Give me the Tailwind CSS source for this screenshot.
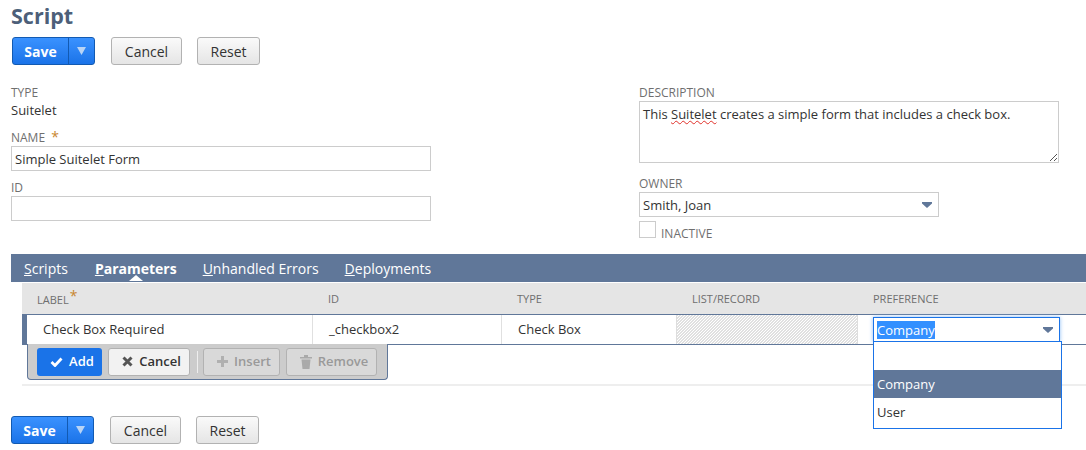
<!DOCTYPE html>
<html lang="en">
<head>
  <meta charset="UTF-8">
  <title>Script</title>
  <script src="https://cdn.jsdelivr.net/npm/@tailwindcss/browser@4"></script>
</head>
<body class="bg-white h-[450px] w-[1086px] overflow-hidden font-['Open_Sans',sans-serif] text-[13px] text-[#333]">
  <h1 class="pl-[11px] pt-[2px] h-[37px] text-[21.5px] leading-[28px] font-bold text-[#4d5f79]">Script</h1>

  <div class="flex pl-[12px] h-[28px]">
    <div class="flex w-[83px] h-[28px] rounded-[3px] border border-[#125ab2] bg-gradient-to-b from-[#3a92ff] to-[#1a73e8] text-white text-[14px] font-bold">
      <span class="w-[55px] flex items-center justify-center">Save</span>
      <span class="flex-1 flex items-center justify-center border-l border-[#125ab2]">
        <svg width="9" height="8" viewBox="0 0 9 8"><path d="M0 0h9L4.500 8z" fill="#b9d4f5"/></svg>
      </span>
    </div>
    <button class="ml-[16px] w-[71px] rounded-[3px] border border-[#b2b2b2] bg-gradient-to-b from-[#fafafa] to-[#e5e5e5] text-[14px] font-medium text-[#333]">Cancel</button>
    <button class="ml-[15px] w-[63px] rounded-[3px] border border-[#b2b2b2] bg-gradient-to-b from-[#fafafa] to-[#e5e5e5] text-[14px] font-medium text-[#333]">Reset</button>
  </div>

  <div class="flex pl-[11px] pt-[20px] h-[189px]">
    <div class="w-[628px]">
      <div class="text-[12px] leading-[16px] text-[#6f6f6f]">TYPE</div>
      <div class="-mt-px leading-[20px]">Suitelet</div>
      <div class="mt-[8px] h-[18px] text-[12px] leading-[18px] text-[#6f6f6f]">NAME <span class="ml-[3px] text-[#c8862f] text-[14px]">*</span></div>
      <input value="Simple Suitelet Form" class="block w-[420px] h-[25px] px-[3px] border border-[#ccc] outline-none">
      <div class="mt-[8px] h-[17px] text-[12px] leading-[17px] text-[#6f6f6f]">ID</div>
      <input class="block w-[420px] h-[25px] px-[3px] border border-[#ccc] outline-none">
    </div>
    <div class="w-[420px]">
      <div class="text-[12px] leading-[16px] text-[#6f6f6f]">DESCRIPTION</div>
      <div class="relative w-[420px] h-[62px] px-[3px] pt-[3px] border border-[#ccc] leading-[19px]">
        This <span class="underline decoration-wavy decoration-[#e0302a] decoration-1">Suitelet</span> creates a simple form that includes a check box.
        <svg class="absolute right-0 bottom-0" width="9" height="9" viewBox="0 0 9 9"><path d="M1 8l7-7M5 8l3-3" stroke="#555" stroke-width="1"/></svg>
      </div>
      <div class="mt-[11px] h-[18px] pt-px text-[12px] leading-[18px] text-[#6f6f6f]">OWNER</div>
      <div class="flex items-center justify-between w-[300px] h-[25px] pl-[3px] pr-[6px] border border-[#ccc]">
        <span class="pt-[2px]">Smith, Joan</span>
        <svg width="10" height="6" viewBox="0 0 10 6"><path d="M0 0h10v1.500L5 6 0 1.500z" fill="#607799"/></svg>
      </div>
      <div class="flex mt-[4px]">
        <span class="w-[17px] h-[17px] border border-[#ccc]"></span>
        <span class="ml-[5px] mt-[5px] text-[12px] leading-[16px] text-[#6f6f6f]">INACTIVE</span>
      </div>
    </div>
  </div>

  <div class="ml-[11px] flex h-[28px] pl-[13px] pt-px bg-[#607799] text-[14px] leading-[28px] text-white">
    <span><u>S</u>cripts</span>
    <span class="relative ml-[27px] font-bold"><u>P</u>arameters
      <span class="absolute left-[34px] bottom-[1px] w-0 h-0 border-x-[7px] border-x-transparent border-b-[6px] border-b-white"></span>
    </span>
    <span class="ml-[26px]"><u>U</u>nhandled Errors</span>
    <span class="ml-[26px]"><u>D</u>eployments</span>
  </div>

  <div class="relative ml-[22px] mt-[1px]">
    <div class="flex h-[31px] bg-[#e5e5e5] text-[11px] leading-[31px] text-[#6f6f6f]">
      <div class="w-[290px] pl-[15px]">LABEL<span class="relative -top-[3px] ml-[1px] text-[14px] text-[#c8862f]">*</span></div>
      <div class="w-[189px] pl-[16px]">ID</div>
      <div class="w-[175px] pl-[16px]">TYPE</div>
      <div class="w-[181px] pl-[16px]">LIST/RECORD</div>
      <div class="pl-[16px]">PREFERENCE</div>
    </div>

    <div class="flex h-[31px] border-y border-[#607799] border-l-[5px] border-l-[#607799] leading-[29px]">
      <div class="w-[286px] pl-[16px] border-r border-[#e0e0e0]">Check Box Required</div>
      <div class="w-[189px] pl-[16px] border-r border-[#e0e0e0]">_checkbox2</div>
      <div class="w-[174px] pl-[16px]">Check Box</div>
      <div class="w-[182px] border-x border-[#ddd] bg-[repeating-linear-gradient(135deg,#e0e0e0_0,#e0e0e0_1px,#fff_1px,#fff_2.12px)]"></div>
    </div>

    <div class="flex items-center w-[361px] h-[36px] ml-[5px] pl-[9px] -mt-px bg-[#ccc] border border-[#607799] border-t-0 rounded-b-[4px] text-[13px] font-semibold">
      <span class="flex items-center justify-center gap-[6px] w-[65px] h-[28px] pl-[5px] rounded-[3px] bg-[#1a73e8] text-white">
        <svg width="13" height="10" viewBox="0 0 13 10"><path d="M1.500 5l3.500 3.500L11.500 1.500" fill="none" stroke="#fff" stroke-width="2.800"/></svg>Add
      </span>
      <span class="ml-[6px] flex items-center justify-center gap-[6px] w-[82px] h-[28px] pl-[5px] rounded-[3px] border border-[#b2b2b2] bg-[#f2f2f2] text-[#333]">
        <svg width="11" height="11" viewBox="0 0 11 11"><path d="M1.500 1.500l8 8M9.500 1.500l-8 8" stroke="#555" stroke-width="3"/></svg>Cancel
      </span>
      <span class="ml-[7px] w-[1px] h-[22px] bg-[#eee]"></span>
      <span class="ml-[5px] flex items-center justify-center gap-[6px] w-[77px] h-[28px] pl-[5px] rounded-[3px] border border-[#b2b2b2] bg-[#d9d9d9] text-[#999]">
        <svg width="11" height="11" viewBox="0 0 11 11"><path d="M5.500 0v11M0 5.500h11" stroke="#b0b0b0" stroke-width="3"/></svg>Insert
      </span>
      <span class="ml-[6px] flex items-center justify-center gap-[6px] w-[91px] h-[28px] pl-[5px] rounded-[3px] border border-[#b2b2b2] bg-[#d9d9d9] text-[#999]">
        <svg width="12" height="14" viewBox="0 0 12 14"><path d="M0 2h12v1.500H0zM4 0h4v2H4zM1.500 4.500h9L9.500 14h-7z" fill="#aaa"/></svg>Remove
      </span>
    </div>

    <div class="h-[2px] mt-[4px] bg-[#eee]"></div>

    <div class="absolute left-[851px] top-[34px] flex items-center justify-between w-[187px] h-[25px] pl-[3px] pr-[6px] bg-white border border-[#1a73e8] shadow-[0_0_4px_#8bbcf5]">
      <span class="bg-[#3390ff] text-white leading-[18px]">Company</span>
      <svg width="10" height="6" viewBox="0 0 10 6"><path d="M0 0h10v1.500L5 6 0 1.500z" fill="#607799"/></svg>
    </div>
    <div class="absolute left-[851px] top-[58px] w-[189px] h-[88px] bg-white border border-[#1a73e8] leading-[28px]">
      <div class="h-[28px]"></div>
      <div class="h-[28px] pl-[3px] bg-[#607799] text-white">Company</div>
      <div class="h-[28px] pl-[3px]">User</div>
    </div>
  </div>

  <div class="flex pl-[11px] mt-[30px] h-[28px]">
    <div class="flex w-[83px] h-[28px] rounded-[3px] border border-[#125ab2] bg-gradient-to-b from-[#3a92ff] to-[#1a73e8] text-white text-[14px] font-bold">
      <span class="w-[55px] flex items-center justify-center">Save</span>
      <span class="flex-1 flex items-center justify-center border-l border-[#125ab2]">
        <svg width="9" height="8" viewBox="0 0 9 8"><path d="M0 0h9L4.500 8z" fill="#b9d4f5"/></svg>
      </span>
    </div>
    <button class="ml-[16px] w-[71px] rounded-[3px] border border-[#b2b2b2] bg-gradient-to-b from-[#fafafa] to-[#e5e5e5] text-[14px] font-medium text-[#333]">Cancel</button>
    <button class="ml-[15px] w-[63px] rounded-[3px] border border-[#b2b2b2] bg-gradient-to-b from-[#fafafa] to-[#e5e5e5] text-[14px] font-medium text-[#333]">Reset</button>
  </div>
</body>
</html>
